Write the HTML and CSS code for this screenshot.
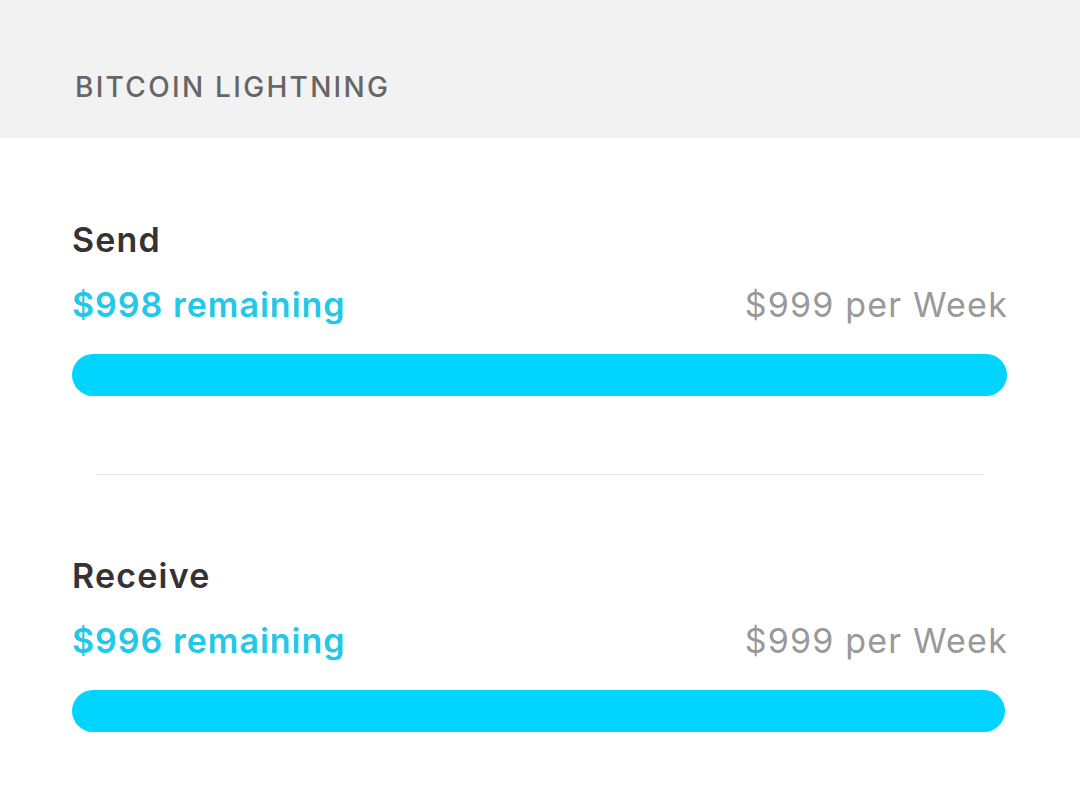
FILE: index.html
```html
<!DOCTYPE html>
<html>
<head>
<meta charset="utf-8">
<link rel="stylesheet" href="styles.css">
</head>
<body>
<header class="header">
  <h1 class="header-title">BITCOIN LIGHTNING</h1>
</header>
<main class="limits">
  <section class="limit">
    <h2 class="limit-label">Send</h2>
    <div class="limit-row">
      <span class="limit-remaining">$998 remaining</span>
      <span class="limit-cap">$999 per Week</span>
    </div>
    <div class="bar-track"><div class="bar-fill" style="width: 99.9%"></div></div>
  </section>
  <hr class="divider">
  <section class="limit">
    <h2 class="limit-label">Receive</h2>
    <div class="limit-row">
      <span class="limit-remaining">$996 remaining</span>
      <span class="limit-cap">$999 per Week</span>
    </div>
    <div class="bar-track"><div class="bar-fill" style="width: 99.7%"></div></div>
  </section>
</main>
</body>
</html>
```
FILE: styles.css
```css
* { box-sizing: border-box; }
html, body { margin: 0; padding: 0; background: #ffffff; }
body { font-family: Inter, "Liberation Sans", sans-serif; color: #333333; }

.header {
  background: #f2f2f2;
  height: 138px;
  padding: 70px 75px 0;
}
.header-title {
  margin: 0;
  font-size: 28px;
  line-height: 34px;
  font-weight: 500;
  letter-spacing: 2.3px;
  color: #666666;
}

.limits {
  padding: 82px 72px 0 72px;
  display: flex;
  flex-direction: column;
}
.limit {
  display: flex;
  flex-direction: column;
}
.limit-label {
  margin: 0;
  font-size: 34px;
  line-height: 40px;
  font-weight: 600;
  letter-spacing: 1.2px;
  color: #333333;
}
.limit-row {
  display: flex;
  justify-content: space-between;
  margin-top: 25px;
  font-size: 34px;
  line-height: 40px;
}
.limit-remaining {
  color: #22c8e8;
  font-weight: 600;
  letter-spacing: 1px;
}
.limit-cap {
  color: #999999;
  font-weight: 400;
  letter-spacing: 1.2px;
}
.bar-track {
  margin-top: 29px;
  height: 42px;
  border-radius: 21px;
}
.bar-fill {
  height: 100%;
  border-radius: 21px;
  background: #00d4ff;
}
.divider {
  margin: 78px 24px 81px;
  border: 0;
  border-top: 1px solid #e6e6e6;
  height: 0;
}
```
